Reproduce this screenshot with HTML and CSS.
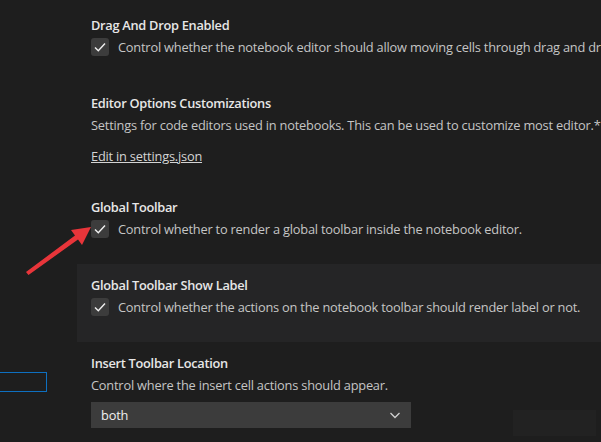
FILE: index.html
```html
<!DOCTYPE html>
<html lang="en">
<head>
    <meta charset="UTF-8">
    <title>Settings - Notebook</title>
    <link rel="stylesheet" href="styles.css">
</head>
<body>
    <div class="settings">
        <aside class="toc">
            <div class="toc-focus"></div>
        </aside>

        <main class="list">
            <div class="setting bool">
                <div class="title">Drag And Drop Enabled</div>
                <label class="check-row">
                    <span class="checkbox"><svg viewBox="0 0 18 18"><path d="M4 9.5 L7.3 12.8 L14 5.6"/></svg></span>
                    <span class="desc">Control whether the notebook editor should allow moving cells through drag and drop.</span>
                </label>
            </div>

            <div class="setting complex">
                <div class="title">Editor Options Customizations</div>
                <div class="desc">Settings for code editors used in notebooks. This can be used to customize most editor.*</div>
                <a class="edit-link" href="#">Edit in settings.json</a>
            </div>

            <div class="setting bool">
                <div class="title">Global Toolbar</div>
                <label class="check-row">
                    <span class="checkbox"><svg viewBox="0 0 18 18"><path d="M4 9.5 L7.3 12.8 L14 5.6"/></svg></span>
                    <span class="desc">Control whether to render a global toolbar inside the notebook editor.</span>
                </label>
            </div>

            <div class="setting bool hovered">
                <div class="title">Global Toolbar Show Label</div>
                <label class="check-row">
                    <span class="checkbox"><svg viewBox="0 0 18 18"><path d="M4 9.5 L7.3 12.8 L14 5.6"/></svg></span>
                    <span class="desc">Control whether the actions on the notebook toolbar should render label or not.</span>
                </label>
            </div>

            <div class="setting enum">
                <div class="title">Insert Toolbar Location</div>
                <div class="desc">Control where the insert cell actions should appear.</div>
                <div class="select">
                    <span>both</span>
                    <svg viewBox="0 0 16 16"><path d="M3.5 6 L8 10.5 L12.5 6"/></svg>
                </div>
            </div>
        </main>

        <svg class="arrow" viewBox="0 0 100 60">
            <path d="M6 57 L8.5 60 L58 24.5 L62 30 L71 12 L51 15 L55 20.5 Z"/>
        </svg>
        <div class="watermark"></div>
    </div>
</body>
</html>
```

FILE: styles.css
```css
body {
    margin: 0;
    background-color: #1e1e1e;
    color: #cccccc;
    font-family: 'Open Sans', 'Noto Sans', sans-serif;
    font-size: 12.8px;
    letter-spacing: -0.2px;
    overflow: hidden;
}

.settings {
    display: flex;
    height: 442px;
    position: relative;
}

.toc {
    width: 47px;
    flex-shrink: 0;
    padding-top: 372px;
}

.toc-focus {
    height: 18px;
    margin-left: -2px;
    border: 1px solid #0e70c0;
}

.list {
    flex: 1;
    margin-left: 30px;
    padding-top: 4px;
    overflow: hidden;
    white-space: nowrap;
}

.setting {
    padding: 12px 14px 0;
}

.setting.bool {
    height: 66px;
}

.setting.complex {
    height: 92px;
}

.setting.hovered {
    background-color: #252526;
}

.title {
    font-weight: 600;
    color: #e7e7e7;
    letter-spacing: -0.28px;
    line-height: 18px;
    height: 18px;
}

.desc {
    line-height: 18px;
    color: #c5c5c5;
}

.setting > .desc {
    margin-top: 4px;
}

.check-row {
    display: flex;
    align-items: center;
    gap: 9px;
    margin-top: 4px;
}

.checkbox {
    width: 18px;
    height: 18px;
    flex-shrink: 0;
    border-radius: 3px;
    background-color: #3c3c3c;
}

.checkbox svg {
    display: block;
    width: 18px;
    height: 18px;
    fill: none;
    stroke: #f0f0f0;
    stroke-width: 1.4;
}

.edit-link {
    display: inline-block;
    margin-top: 13px;
    line-height: 18px;
    color: #d4d4d4;
    text-decoration: underline;
}

.select {
    width: 320px;
    height: 26px;
    margin-top: 8px;
    box-sizing: border-box;
    padding: 0 8px 0 10px;
    background-color: #3c3c3c;
    color: #f0f0f0;
    display: flex;
    align-items: center;
    justify-content: space-between;
}

.select svg {
    width: 16px;
    height: 16px;
    fill: none;
    stroke: #d0d0d0;
    stroke-width: 1.3;
}

.arrow {
    position: absolute;
    left: 20px;
    top: 215px;
    width: 100px;
    height: 60px;
    fill: #e8353a;
}

.watermark {
    position: absolute;
    left: 513px;
    top: 410px;
    width: 83px;
    height: 26px;
    background-color: #222222;
}
```
